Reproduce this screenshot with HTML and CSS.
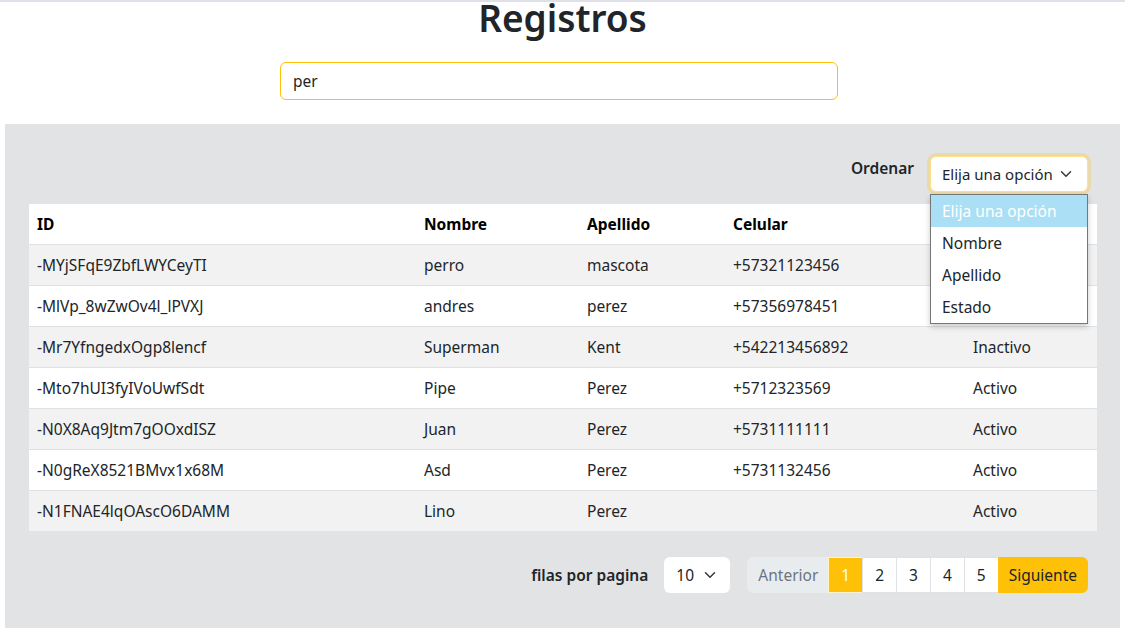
FILE: index.html
```html
<!DOCTYPE html>
<html lang="es">
<head>
<meta charset="utf-8">
<title>Registros</title>
<link rel="stylesheet" href="styles.css">
</head>
<body>
<div class="topline"></div>
<h1 class="title">Registros</h1>
<div class="search-wrap">
  <div class="search">per</div>
</div>
<section class="panel">
  <div class="sort-row">
    <span class="label">Ordenar</span>
    <div class="select-holder">
      <div class="select focused">
        <span>Elija una opción</span>
        <svg class="chev" width="16" height="12" viewBox="0 0 16 16"><path d="m2 5 6 6 6-6" fill="none" stroke="#343a40" stroke-linecap="round" stroke-linejoin="round" stroke-width="2"/></svg>
      </div>
      <ul class="dropdown">
        <li class="hl">Elija una opción</li>
        <li>Nombre</li>
        <li>Apellido</li>
        <li>Estado</li>
      </ul>
    </div>
  </div>
  <table class="grid">
    <colgroup>
      <col class="c-id"><col class="c-nom"><col class="c-ape"><col class="c-cel"><col class="c-est">
    </colgroup>
    <thead>
      <tr><th>ID</th><th>Nombre</th><th>Apellido</th><th>Celular</th><th>Estado</th></tr>
    </thead>
    <tbody>
      <tr><td>-MYjSFqE9ZbfLWYCeyTI</td><td>perro</td><td>mascota</td><td>+57321123456</td><td>Activo</td></tr>
      <tr><td>-MlVp_8wZwOv4l_lPVXJ</td><td>andres</td><td>perez</td><td>+57356978451</td><td>Activo</td></tr>
      <tr><td>-Mr7YfngedxOgp8lencf</td><td>Superman</td><td>Kent</td><td>+542213456892</td><td>Inactivo</td></tr>
      <tr><td>-Mto7hUI3fyIVoUwfSdt</td><td>Pipe</td><td>Perez</td><td>+5712323569</td><td>Activo</td></tr>
      <tr><td>-N0X8Aq9Jtm7gOOxdISZ</td><td>Juan</td><td>Perez</td><td>+5731111111</td><td>Activo</td></tr>
      <tr><td>-N0gReX8521BMvx1x68M</td><td>Asd</td><td>Perez</td><td>+5731132456</td><td>Activo</td></tr>
      <tr><td>-N1FNAE4lqOAscO6DAMM</td><td>Lino</td><td>Perez</td><td></td><td>Activo</td></tr>
    </tbody>
  </table>
  <div class="pager-row">
    <span class="label">filas por pagina</span>
    <div class="select small">
      <span>10</span>
      <svg class="chev" width="16" height="12" viewBox="0 0 16 16"><path d="m2 5 6 6 6-6" fill="none" stroke="#343a40" stroke-linecap="round" stroke-linejoin="round" stroke-width="2"/></svg>
    </div>
    <nav class="pagination">
      <span class="pg wide disabled first">Anterior</span>
      <span class="pg active">1</span>
      <span class="pg">2</span>
      <span class="pg">3</span>
      <span class="pg">4</span>
      <span class="pg">5</span>
      <span class="pg wide next last">Siguiente</span>
    </nav>
  </div>
</section>
</body>
</html>
```
FILE: styles.css
```css
* { box-sizing: border-box; }
html, body {
  margin: 0;
  padding: 0;
  background: #fff;
  font-family: "Noto Sans", "Open Sans", "Liberation Sans", sans-serif;
  font-size: 15.5px;
  color: #212529;
}
.topline {
  height: 2px;
  background: #dfe1e8;
}
.title {
  margin: -7px 0 0;
  text-align: center;
  font-size: 37px;
  font-weight: 600;
  line-height: 46px;
  color: #212529;
}
.search-wrap {
  display: flex;
  justify-content: center;
  margin-top: 21px;
  padding-right: 7px;
}
.search {
  width: 558px;
  height: 38px;
  border: 1px solid #ffc107;
  border-radius: 6px;
  padding: 0 12px;
  line-height: 36px;
  background: #fff;
}
.panel {
  margin: 24px 5px 0;
  height: 504px;
  background: #e2e3e5;
  padding: 32px 24px 0 24px;
}
.sort-row {
  display: flex;
  justify-content: flex-end;
  align-items: flex-start;
  gap: 16px;
  padding-right: 8px;
  height: 48px;
}
.label {
  font-weight: 600;
  line-height: 24px;
  white-space: nowrap;
}
.select-holder {
  position: relative;
}
.select {
  display: flex;
  align-items: center;
  justify-content: space-between;
  background: #fff;
  border-radius: 6px;
  height: 36px;
  padding: 0 12px;
  white-space: nowrap;
}
.select.focused {
  width: 158px;
  font-size: 15px;
  padding: 0 13px 0 11px;
  border: 1px solid #fee08a;
  box-shadow: 0 0 0 3px rgba(255, 193, 7, 0.25);
}
.chev { flex: none; }
.dropdown {
  position: absolute;
  top: 38px;
  left: 0;
  width: 158px;
  margin: 0;
  padding: 0;
  list-style: none;
  background: #fff;
  border: 1px solid #767676;
  box-shadow: 0 3px 6px rgba(0, 0, 0, 0.2);
  z-index: 5;
}
.dropdown li {
  height: 32px;
  line-height: 32px;
  padding: 0 11px;
  white-space: nowrap;
}
.dropdown li.hl {
  background: #aadff5;
  color: #fff;
}
.grid {
  width: 1068px;
  border-collapse: collapse;
  table-layout: fixed;
  background: #fff;
}
.c-id { width: 387px; }
.c-nom { width: 163px; }
.c-ape { width: 146px; }
.c-cel { width: 240px; }
.c-est { width: 132px; }
.grid th, .grid td {
  text-align: left;
  padding: 8px 8px;
  line-height: 24px;
  border-bottom: 1px solid #dee2e6;
  white-space: nowrap;
}
.grid th {
  font-weight: 700;
  color: #000;
}
.grid tbody tr:nth-child(odd) td { background: #f2f2f2; }
.grid tbody tr:last-child td { border-bottom: 0; }
.pager-row {
  display: flex;
  justify-content: flex-end;
  align-items: center;
  gap: 16px;
  margin-top: 26px;
  padding-right: 8px;
}
.select.small {
  width: 66px;
  height: 36px;
  margin-right: 1px;
}
.pagination {
  display: flex;
  height: 36px;
}
.pg {
  display: flex;
  align-items: center;
  justify-content: center;
  padding: 0 12px;
  background: #fff;
  border: 1px solid #dee2e6;
  margin-left: -1px;
  color: #212529;
  min-width: 34px;
}
.pg.wide { padding: 0 10px; }
.pg.first {
  border-radius: 6px 0 0 6px;
  margin-left: 0;
}
.pg.last { border-radius: 0 6px 6px 0; }
.pg.disabled {
  background: #e9ecef;
  color: #6c757d;
  border-color: #e9ecef;
}
.pg.active {
  background: #ffc107;
  color: #fff;
  border-color: #fff3cd;
}
.pg.next {
  background: #ffc107;
  border-color: #ffc107;
  color: #212529;
}
```
